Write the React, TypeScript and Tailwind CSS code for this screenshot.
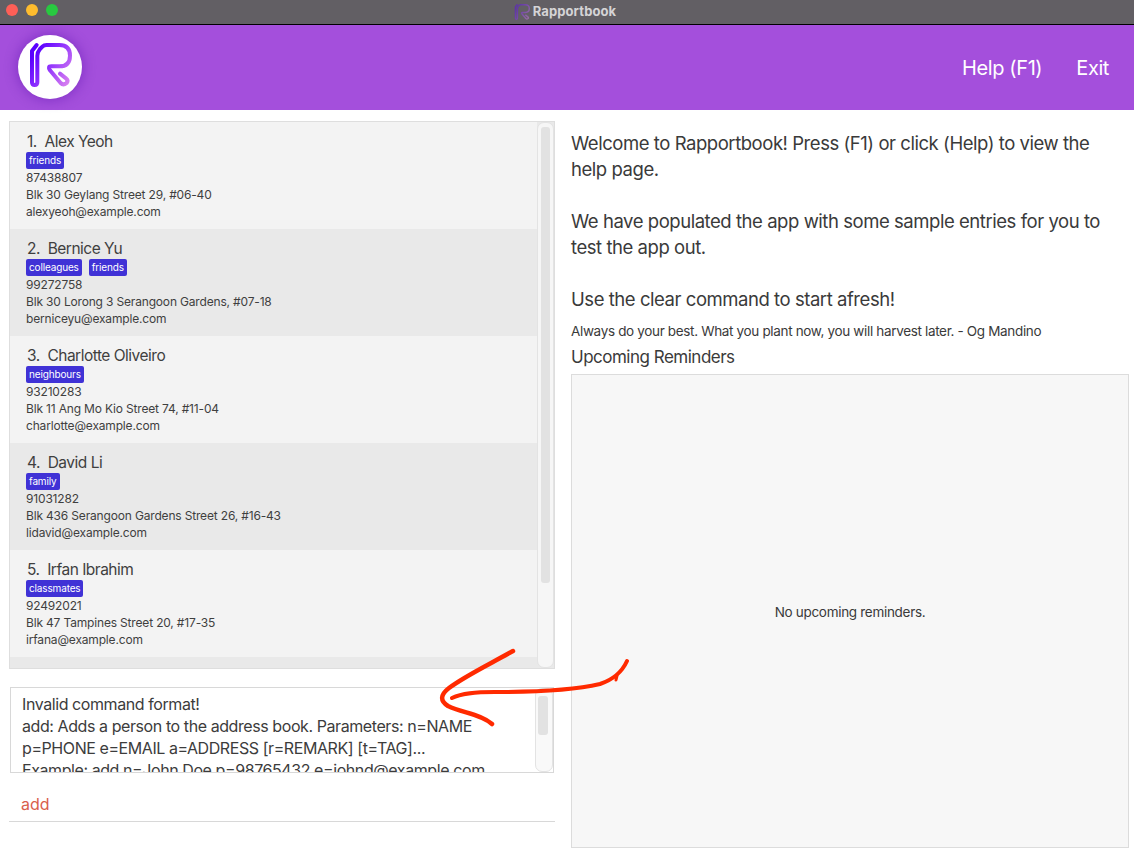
import React from 'react';

// ── Data ───────────────────────────────────────────────────────────────────
const persons = [
  { name: 'Alex Yeoh', tags: ['friends'], phone: '87438807', address: 'Blk 30 Geylang Street 29, #06-40', email: 'alexyeoh@example.com' },
  { name: 'Bernice Yu', tags: ['colleagues', 'friends'], phone: '99272758', address: 'Blk 30 Lorong 3 Serangoon Gardens, #07-18', email: 'berniceyu@example.com' },
  { name: 'Charlotte Oliveiro', tags: ['neighbours'], phone: '93210283', address: 'Blk 11 Ang Mo Kio Street 74, #11-04', email: 'charlotte@example.com' },
  { name: 'David Li', tags: ['family'], phone: '91031282', address: 'Blk 436 Serangoon Gardens Street 26, #16-43', email: 'lidavid@example.com' },
  { name: 'Irfan Ibrahim', tags: ['classmates'], phone: '92492021', address: 'Blk 47 Tampines Street 20, #17-35', email: 'irfana@example.com' },
];

// ── Logo ───────────────────────────────────────────────────────────────────
const Logo = ({ size, muted = false }: { size: number; muted?: boolean }) => {
  const id = muted ? 'rb-small' : 'rb-large';
  return (
    <svg
      width={size}
      height={size}
      viewBox={muted ? '24 24 132 132' : '0 0 180 180'}
      fill="none"
      strokeLinecap="round"
      strokeLinejoin="round"
      opacity={muted ? 0.45 : 1}
    >
      <defs>
        <linearGradient id={id} x1="40" y1="60" x2="150" y2="130" gradientUnits="userSpaceOnUse">
          <stop offset="0" stopColor="#5a00ff" />
          <stop offset="0.4" stopColor="#8a2cff" />
          <stop offset="1" stopColor="#d47cf0" />
        </linearGradient>
      </defs>
      <path
        d="M50 30 L36 48 V142 Q36 150 44 150 Q52 150 52 142 V62 Q52 52 60 42 L68 34 Q72 30 80 30 H118 Q150 30 150 62 Q150 94 118 94 H94 Q82 94 90 106 L122 144 Q130 152 140 144 Q146 136 138 130 L120 116"
        stroke={`url(#${id})`}
        strokeWidth="12"
      />
    </svg>
  );
};

// ── PersonCard ─────────────────────────────────────────────────────────────
const PersonCard = ({ person, index }: { person: (typeof persons)[number]; index: number }) => (
  <div className={`h-[107px] pl-[16px] pt-[9px] text-[#3f3f3f] ${index % 2 === 0 ? 'bg-[#f3f3f3]' : 'bg-[#e9e9e9]'}`}>
    <p className="h-[21px] pl-px text-[15.5px] leading-[21px] tracking-[-0.5px]">
      {index + 1}.&nbsp; {person.name}
    </p>
    <div className="flex h-[17px] gap-[7px]">
      {person.tags.map((tag) => (
        <span key={tag} className="h-[17px] rounded-[2px] bg-[#4032d6] px-[3px] text-[10px] leading-[17px] tracking-[-0.15px] text-white">
          {tag}
        </span>
      ))}
    </div>
    <div className="text-[12px] leading-[17px] tracking-[-0.17px]">
      <p>{person.phone}</p>
      <p>{person.address}</p>
      <p>{person.email}</p>
    </div>
  </div>
);

// ── App ────────────────────────────────────────────────────────────────────
export default function App() {
  return (
    <div className="relative flex h-[858px] w-[1134px] flex-col overflow-hidden bg-white font-['Inter','Liberation_Sans',sans-serif]">
      {/* title bar */}
      <div className="relative flex h-[25px] shrink-0 items-center justify-center border-b border-black bg-[#625f64]">
        <div className="absolute left-[6px] top-[4px] flex gap-2">
          <span className="h-3 w-3 rounded-full bg-[#fe5f57]" />
          <span className="h-3 w-3 rounded-full bg-[#febc2e]" />
          <span className="h-3 w-3 rounded-full bg-[#28c840]" />
        </div>
        <div className="flex items-center gap-[3px] pr-[4px]">
          <Logo size={16} muted />
          <span className="text-[13px] font-bold tracking-[0.1px] text-[#d5d4d6]">Rapportbook</span>
        </div>
      </div>

      {/* header */}
      <div className="flex h-[85px] shrink-0 items-center justify-between bg-[#a44fdc] pl-[18px] pr-[25px]">
        <div className="mb-px flex h-[64px] w-[64px] items-start justify-center rounded-full bg-white shadow-[0_0_14px_rgba(70,0,160,0.45)]">
          <Logo size={60} />
        </div>
        <div className="flex gap-[34px] text-[20px] tracking-[-0.4px] text-white">
          <span>Help (F1)</span>
          <span>Exit</span>
        </div>
      </div>

      {/* body */}
      <div className="flex flex-1">
        {/* left column */}
        <div className="ml-[9px] mt-[11px] w-[546px] shrink-0">
          <div className="flex h-[548px] border border-[#dedede] bg-[#e9e9e9]">
            <div className="flex-1 overflow-hidden">
              {persons.map((p, i) => (
                <PersonCard key={p.name} person={p} index={i} />
              ))}
            </div>
            <div className="w-[17px] shrink-0 rounded-[7px] border border-[#e3e3e3] bg-[#f6f6f6] px-[3px] py-[4px]">
              <div className="h-[456px] rounded-[3px] bg-[#e2e2e2]" />
            </div>
          </div>

          <div className="ml-px mr-px mt-[18px] flex h-[86px] border border-[#d8d8d8] bg-white">
            <div className="flex-1 overflow-hidden pl-[11px] pt-[5px] text-[16px] leading-[22px] tracking-[-0.42px] text-[#3c3c3c]">
              <p>Invalid command format!</p>
              <p>add: Adds a person to the address book. Parameters: n=NAME</p>
              <p>p=PHONE e=EMAIL a=ADDRESS [r=REMARK] [t=TAG]...</p>
              <p className="whitespace-nowrap">Example: add n=John Doe p=98765432 e=johnd@example.com</p>
            </div>
            <div className="w-[18px] shrink-0 rounded-[7px] border border-[#e3e3e3] bg-[#f9f9f9] pl-[2px] pr-[4px] pt-[7px]">
              <div className="h-[39px] rounded-[3px] bg-[#e2e2e2]" />
            </div>
          </div>

          <div className="mt-[4px] h-[45px] border-b border-[#d8d8d8] pl-[12px] pt-[17px] text-[16px] leading-[20px] text-[#d9604c]">
            add
          </div>
        </div>

        {/* right column */}
        <div className="ml-[16px] flex flex-1 flex-col pr-[5px] text-[#3a3a3a]">
          <div className="mt-[20px] whitespace-nowrap text-[18.5px] leading-[26px] tracking-[-0.45px]">
            <p>Welcome to Rapportbook! Press (F1) or click (Help) to view the</p>
            <p>help page.</p>
            <p className="mt-[26px]">We have populated the app with some sample entries for you to</p>
            <p>test the app out.</p>
            <p className="mt-[26px]">Use the clear command to start afresh!</p>
          </div>
          <p className="mt-[9px] text-[13.5px] leading-[20px] tracking-[-0.34px]">
            Always do your best. What you plant now, you will harvest later. - Og Mandino
          </p>
          <p className="mt-[5px] text-[17px] leading-[22px] tracking-[-0.5px]">Upcoming Reminders</p>
          <div className="mb-[10px] mt-[6px] flex flex-1 items-center justify-center border border-[#dcdcdc] bg-[#f7f7f7] pt-[2px] text-[13.5px] tracking-[-0.3px]">
            No upcoming reminders.
          </div>
        </div>
      </div>

      {/* hand-drawn arrow over the result box */}
      <svg className="absolute left-0 top-0" width="1134" height="858" fill="none" stroke="#ff2a00" strokeLinecap="round" strokeLinejoin="round">
        <path d="M513 651 C490 664 465 676 449 688 C440 695 440 701 448 706 C462 713 481 714 492 724" strokeWidth="4.5" />
        <path d="M452 698 C462 693 475 692 495 692 C530 692 570 691 600 684 C612 680 622 672 627 661" strokeWidth="4" />
        <path d="M617 676 L616 680" strokeWidth="3" />
      </svg>
    </div>
  );
}
